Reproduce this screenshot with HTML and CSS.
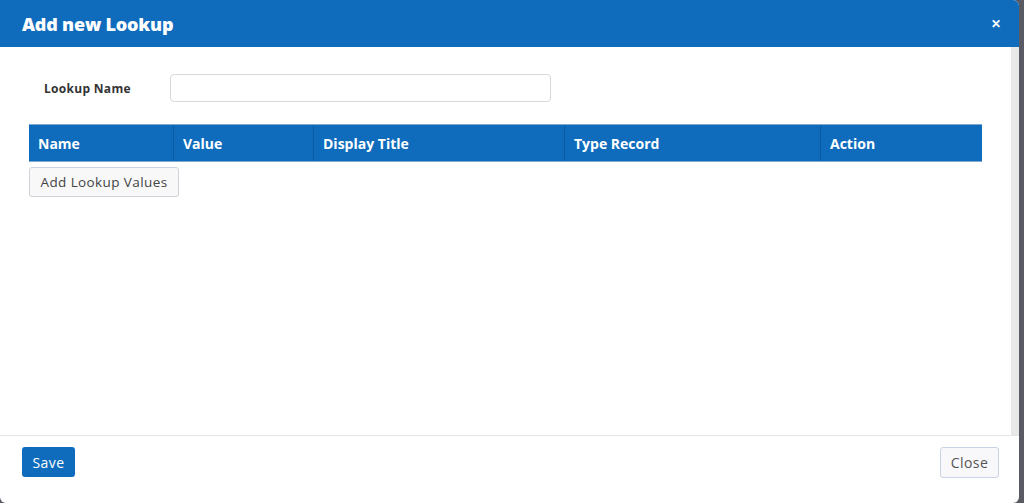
FILE: index.html
```html
<!DOCTYPE html>
<html>
<head>
<meta charset="utf-8">
<link rel="stylesheet" href="styles.css">
</head>
<body>
<div class="modal">
  <div class="modal-header">
    <h1 class="modal-title">Add new Lookup</h1>
    <span class="modal-x">&#x2715;</span>
  </div>
  <div class="modal-main">
    <div class="modal-body">
      <div class="form-row">
        <label class="form-label">Lookup Name</label>
        <div class="form-input"></div>
      </div>
      <div class="table-head">
        <div class="th c1">Name</div>
        <div class="th c2">Value</div>
        <div class="th c3">Display Title</div>
        <div class="th c4">Type Record</div>
        <div class="th c5">Action</div>
      </div>
      <button class="btn-add">Add Lookup Values</button>
    </div>
    <div class="scroll-track"></div>
  </div>
  <div class="modal-footer">
    <button class="btn-save">Save</button>
    <button class="btn-close">Close</button>
  </div>
</div>
</body>
</html>
```
FILE: styles.css
```css
* { box-sizing: border-box; }
html, body { margin: 0; height: 100%; }
body {
  background: #595a64;
  font-family: "Open Sans", "Liberation Sans", sans-serif;
  overflow: hidden;
  display: flex;
}
.modal {
  width: 1019px;
  height: 503px;
  background: #fff;
  border-radius: 0 6px 6px 6px;
  display: flex;
  flex-direction: column;
  overflow: hidden;
}
.modal-header {
  height: 47px;
  background: #0f6cbd;
  display: flex;
  align-items: center;
  justify-content: space-between;
  padding: 0 18px 0 22px;
  flex: none;
}
.modal-title {
  margin: 0;
  color: #fff;
  font-size: 18px;
  font-weight: 800;
  letter-spacing: -0.2px;
}
.modal-x {
  color: #fff;
  font-size: 12px;
  font-weight: 700;
  margin-top: -1px;
}
.modal-main {
  flex: 1;
  display: flex;
  min-height: 0;
}
.modal-body {
  flex: 1;
  padding: 27px 29px 0 29px;
}
.scroll-track {
  width: 8px;
  background: #e8e8e8;
  flex: none;
}
.form-row {
  display: flex;
  align-items: center;
  height: 28px;
}
.form-label {
  width: 141px;
  padding-left: 15px;
  font-size: 12px;
  font-weight: 700;
  letter-spacing: 0.3px;
  color: #333;
}
.form-input {
  width: 381px;
  height: 28px;
  border: 1px solid #d9d9d9;
  border-radius: 4px;
}
.table-head {
  display: flex;
  margin-top: 22px;
  width: 953px;
  height: 38px;
  background: #0f6cbd;
  border-top: 1px solid #7fa8cf;
  border-bottom: 1px solid #7fa8cf;
}
.th {
  color: #fff;
  font-size: 14px;
  font-weight: 700;
  padding-left: 9px;
  display: flex;
  align-items: center;
  border-right: 1px solid #0b5aa2;
}
.th:last-child { border-right: none; }
.c1 { width: 145px; }
.c2 { width: 140px; }
.c3 { width: 251px; }
.c4 { width: 256px; }
.c5 { flex: 1; }
.btn-add {
  display: block;
  margin-top: 5px;
  width: 150px;
  height: 30px;
  background: #f8f8f8;
  border: 1px solid #cfd4da;
  border-radius: 3px;
  font-family: inherit;
  font-size: 13.5px;
  letter-spacing: 0.4px;
  color: #444;
  padding: 0;
}
.modal-footer {
  height: 68px;
  flex: none;
  border-top: 1px solid #e6e6e6;
  display: flex;
  justify-content: space-between;
  align-items: flex-start;
  padding: 11px 20px 0 22px;
}
.btn-save {
  width: 53px;
  height: 30px;
  background: #0f6cbd;
  color: #fff;
  border: none;
  border-radius: 3px;
  font-family: inherit;
  font-size: 14px;
  letter-spacing: 0.4px;
  padding: 0;
}
.btn-close {
  width: 59px;
  height: 31px;
  background: #f8f8fa;
  color: #555;
  border: 1px solid #c9d3e3;
  border-radius: 3px;
  font-family: inherit;
  font-size: 14px;
  letter-spacing: 0.4px;
  padding: 0;
}
```
